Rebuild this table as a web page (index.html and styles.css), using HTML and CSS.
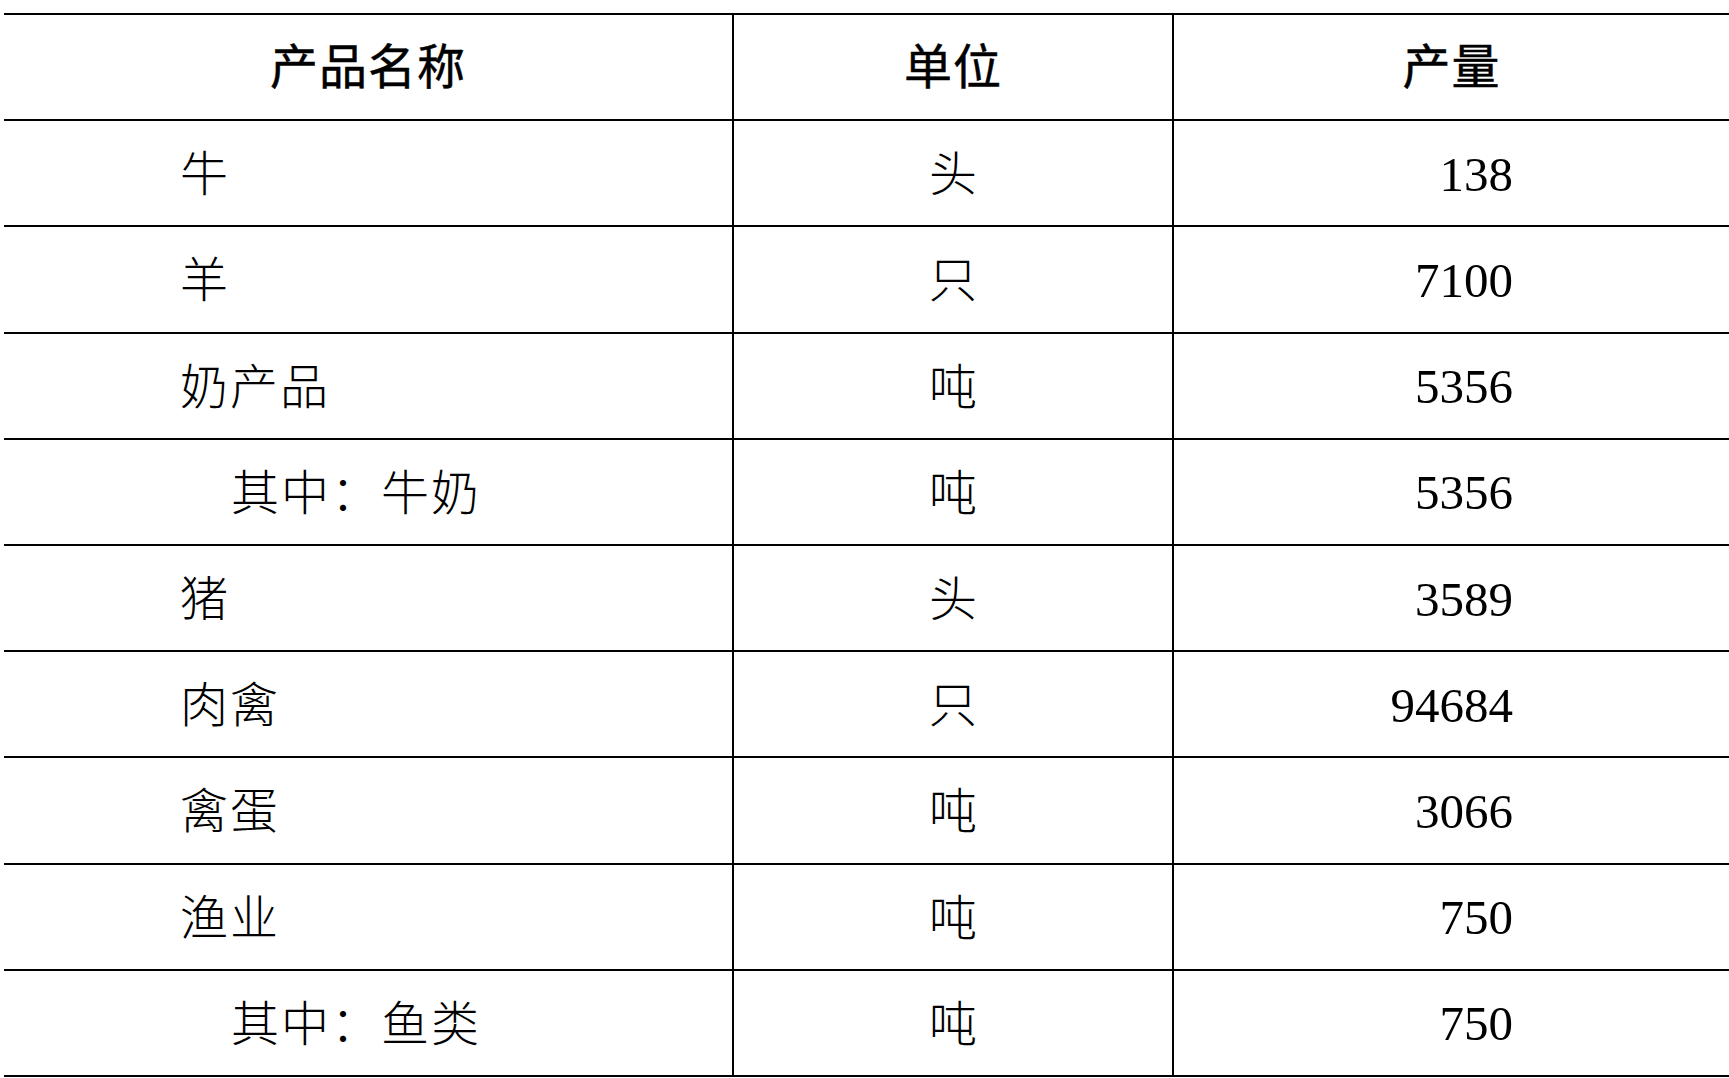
FILE: index.html
```html
<!DOCTYPE html>
<html lang="zh-CN">
<head>
<meta charset="utf-8">
<title>产品产量</title>
<link rel="stylesheet" href="styles.css">
</head>
<body>
<table class="stats">
  <colgroup>
    <col class="c-name">
    <col class="c-unit">
    <col class="c-qty">
  </colgroup>
  <thead>
    <tr>
      <th class="h-name">产品名称</th>
      <th class="h-unit">单位</th>
      <th class="h-qty">产量</th>
    </tr>
  </thead>
  <tbody>
    <tr><td class="name">牛</td><td class="unit">头</td><td class="qty">138</td></tr>
    <tr><td class="name">羊</td><td class="unit">只</td><td class="qty">7100</td></tr>
    <tr><td class="name">奶产品</td><td class="unit">吨</td><td class="qty">5356</td></tr>
    <tr><td class="name sub">其中：牛奶</td><td class="unit">吨</td><td class="qty">5356</td></tr>
    <tr><td class="name">猪</td><td class="unit">头</td><td class="qty">3589</td></tr>
    <tr><td class="name">肉禽</td><td class="unit">只</td><td class="qty">94684</td></tr>
    <tr><td class="name">禽蛋</td><td class="unit">吨</td><td class="qty">3066</td></tr>
    <tr><td class="name">渔业</td><td class="unit">吨</td><td class="qty">750</td></tr>
    <tr><td class="name sub">其中：鱼类</td><td class="unit">吨</td><td class="qty">750</td></tr>
  </tbody>
</table>
</body>
</html>
```
FILE: styles.css
```css
html, body {
  margin: 0;
  padding: 0;
  background: #ffffff;
  overflow: hidden;
}

body {
  font-family: "Noto Sans CJK SC", "Liberation Serif", serif;
  color: #000;
}

.stats {
  margin: 13px 0 0 4px;
  width: 1725px;
  table-layout: fixed;
  border-collapse: collapse;
}

.stats tr {
  height: 106.2px;
}

.c-name { width: 729px; }
.c-unit { width: 440px; }
.c-qty { width: 556px; }

.stats th,
.stats td {
  padding: 0;
  border-bottom: 2px solid #000;
  vertical-align: middle;
  font-size: 48px;
  line-height: 1;
  white-space: nowrap;
}

.stats th {
  border-top: 2px solid #000;
  font-weight: 400;
  -webkit-text-stroke: 0.5px #000;
  text-align: center;
  letter-spacing: 1px;
  padding-bottom: 8px;
}

.stats th + th,
.stats td + td {
  border-left: 2px solid #000;
}

.name {
  font-weight: 200;
  padding-left: 176px !important;
  padding-bottom: 6px !important;
  letter-spacing: 2px;
}

.name.sub {
  padding-left: 227px !important;
}

.unit {
  font-weight: 200;
  text-align: center;
  padding-bottom: 6px !important;
}

.qty {
  font-family: "Liberation Serif", serif;
  font-size: 49px !important;
  text-align: right;
  padding-right: 216px !important;
  padding-top: 2px !important;
}
```
